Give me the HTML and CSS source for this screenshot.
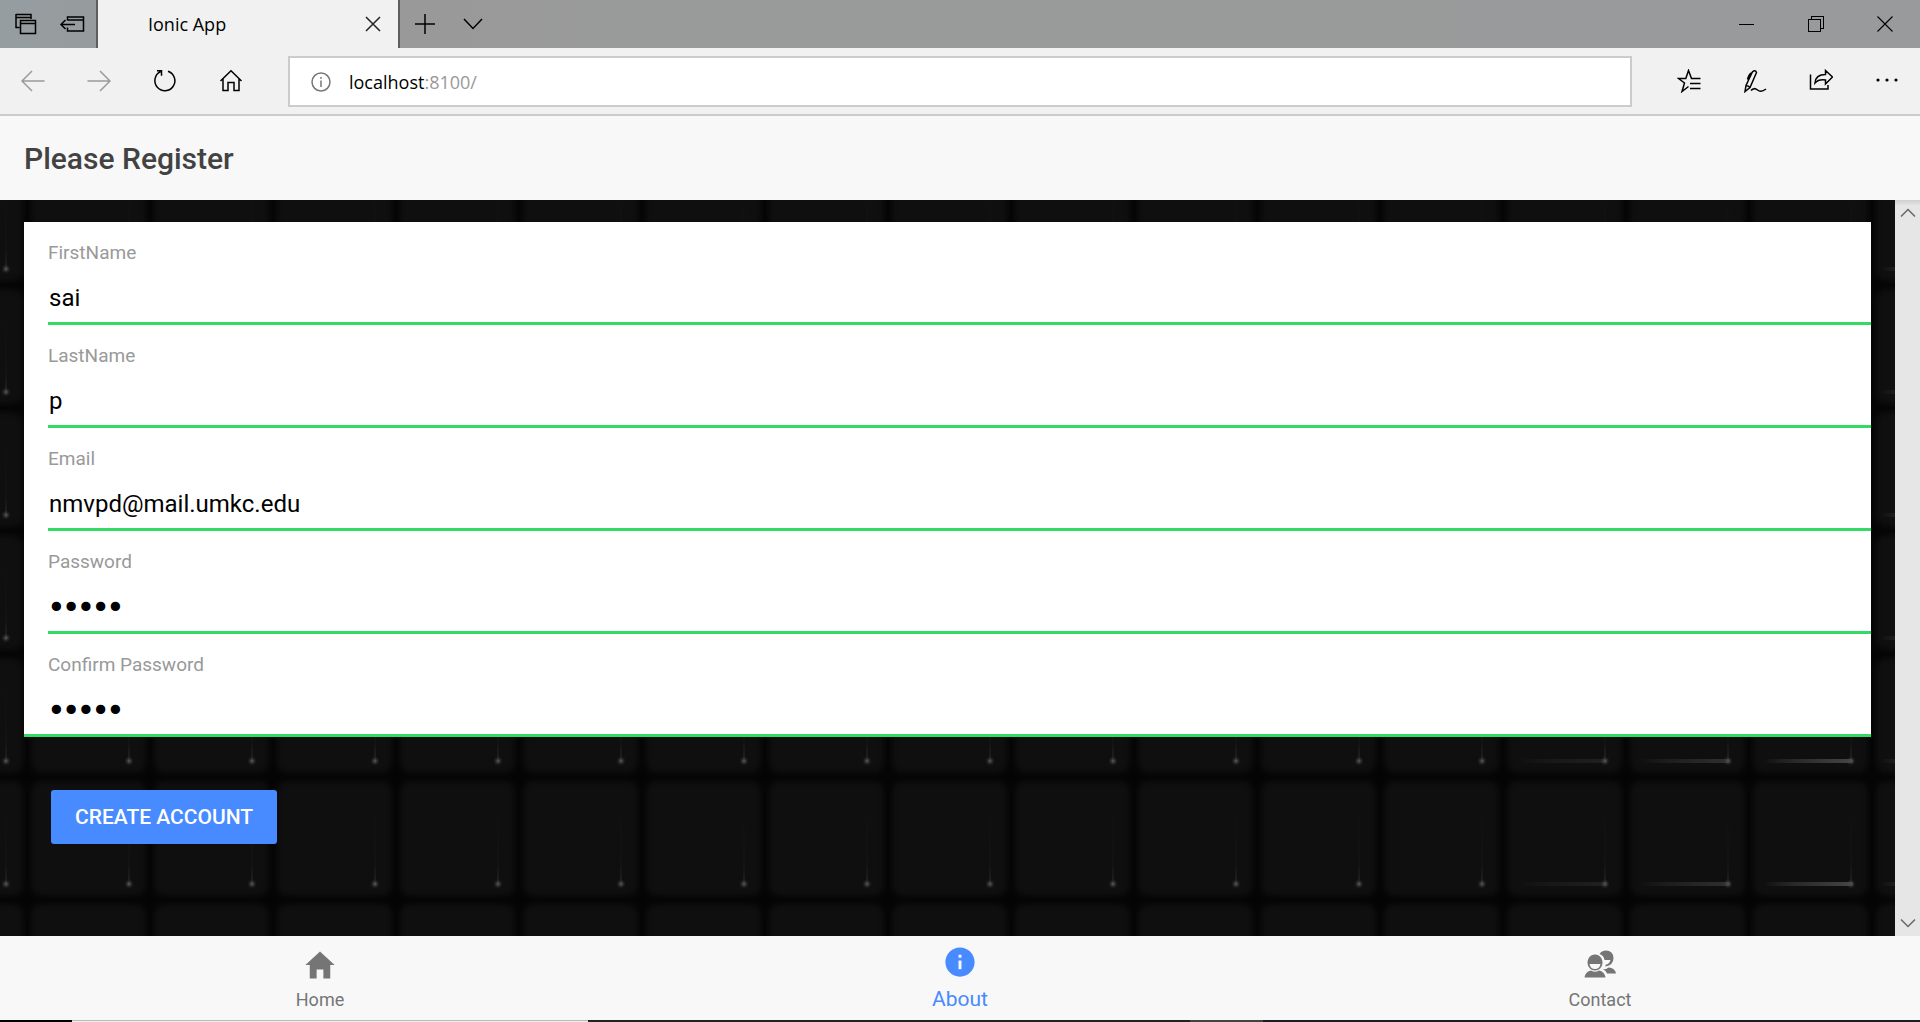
FILE: index.html
```html
<!DOCTYPE html>
<html lang="en">
<head>
<meta charset="utf-8">
<title>Ionic App</title>
<link rel="stylesheet" href="styles.css">
</head>
<body>
<div class="tabstrip">
  <div class="tabstrip-tools">
    <button class="chrome-btn tool" aria-label="Tabs set aside"><svg width="24" height="24" viewBox="0 0 24 24"><path d="M3 2.500h15V7M3 2v13.500h3.500M3 5.500h15M7.500 8.500h15v13h-15zM7.500 11.500h15"/></svg></button>
    <button class="chrome-btn tool" aria-label="Set tabs aside"><svg width="26" height="24" viewBox="0 0 26 24"><path d="M8.500 8.500V5h16v14h-16v-3.500M8.500 8h16M2 12.500h14M6.500 8L2 12.500L6.500 17"/></svg></button>
  </div>
  <div class="tab">
    <span class="tab-name">Ionic App</span>
    <button class="chrome-btn tab-close" aria-label="Close tab"><svg width="16" height="16" viewBox="0 0 16 16"><path d="M1 1l14 14M15 1L1 15"/></svg></button>
  </div>
  <div class="tab-actions">
    <button class="chrome-btn tool" aria-label="New tab"><svg width="20" height="20" viewBox="0 0 20 20"><path d="M10 0v20M0 10h20"/></svg></button>
    <button class="chrome-btn tool" aria-label="Tab previews"><svg width="20" height="12" viewBox="0 0 20 12"><path d="M1 1l9 9.500L19 1"/></svg></button>
  </div>
  <div class="window-actions">
    <button class="chrome-btn win" aria-label="Minimize"><svg class="crisp" width="15" height="15" viewBox="0 0 15 15"><path d="M0 7.500h15"/></svg></button>
    <button class="chrome-btn win" aria-label="Restore"><svg class="crisp" width="16" height="16" viewBox="0 0 16 16"><path d="M.5 3.500h12v12H.5zM3.500 3.500v-3h12v12h-3"/></svg></button>
    <button class="chrome-btn win" aria-label="Close"><svg class="thin" width="16" height="16" viewBox="0 0 16 16"><path d="M.5 .5l15 15M15.500 .5l-15 15"/></svg></button>
  </div>
</div>

<nav class="toolbar" aria-label="Browser">
  <div class="nav-actions">
    <button class="chrome-btn nav dim" aria-label="Back"><svg width="24" height="22" viewBox="0 0 24 22"><path d="M23.500 11H1M11 1L1 11l10 10"/></svg></button>
    <button class="chrome-btn nav dim" aria-label="Forward"><svg width="24" height="22" viewBox="0 0 24 22"><path d="M.5 11H23M13 1l10 10-10 10"/></svg></button>
    <button class="chrome-btn nav" aria-label="Refresh"><svg width="24" height="24" viewBox="0 0 24 24"><path d="M15 2.200a10 10 0 1 1-7.500 .5M4 1.800h4.500v5"/></svg></button>
    <button class="chrome-btn nav" aria-label="Home"><svg width="24" height="24" viewBox="0 0 24 24"><path d="M1.500 12L12 1.800L22.500 12M4 9.800v11.700h5v-8h6v8h5v-11.700"/></svg></button>
  </div>
  <label class="address">
    <svg width="20" height="20" viewBox="0 0 20 20"><circle cx="10" cy="10" r="9"/><path d="M10 8.500v6.500M10 5v1.800"/></svg>
    <span class="url">localhost<span class="url-port">:8100/</span></span>
  </label>
  <div class="page-actions">
    <button class="chrome-btn nav" aria-label="Favorites"><svg width="24" height="24" viewBox="0 0 24 24"><path d="M23.500 9.500H14.500L11.500 1.500L8.800 9.500H1.500L7.500 14L5 22.500L11.500 17.500M13 14.500h10.500M13 19.500h10.500"/></svg></button>
    <button class="chrome-btn nav" aria-label="Add notes"><svg width="24" height="24" viewBox="0 0 24 24"><path d="M2 22.500l1-6L9.500 2.800q3-2.500 4 .7L7 18.500zM3 16.500q2.500 .2 4 2M8.500 4Q6 5 4.500 10.500M8 21.500q3-3.500 6.500-.5t8.500-1"/></svg></button>
    <button class="chrome-btn nav" aria-label="Share"><svg width="24" height="24" viewBox="0 0 24 24"><path d="M1.500 5.500v14.500h17.500v-4M6 14q.5-8.500 10.500-8.500V1.500L23.500 8l-7 7V11Q9.500 10 6 14z"/></svg></button>
    <button class="chrome-btn nav" aria-label="Settings and more"><svg class="solid" width="24" height="24" viewBox="0 0 24 24"><circle cx="3" cy="11" r="1.600"/><circle cx="12" cy="11" r="1.600"/><circle cx="21" cy="11" r="1.600"/></svg></button>
  </div>
</nav>

<header class="app-header"><h1>Please Register</h1></header>

<div class="viewport">
  <main class="content">
    <svg class="backdrop" width="100%" height="100%" aria-hidden="true">
      <defs>
        <filter id="soft" x="-20%" y="-20%" width="140%" height="140%" color-interpolation-filters="sRGB"><feGaussianBlur stdDeviation="3"/></filter>
        <linearGradient id="edge" x1="0" x2="0" y1="0" y2="1"><stop offset="0" stop-color="#121212" stop-opacity="0"/><stop offset=".8" stop-color="#131313"/><stop offset="1" stop-color="#202020"/></linearGradient>
        <linearGradient id="shine" x1="0" x2="1" y1="0" y2="0"><stop offset="0" stop-color="#444" stop-opacity="0"/><stop offset=".5" stop-color="#333"/><stop offset="1" stop-color="#4c4c4c"/></linearGradient>
        <radialGradient id="glint"><stop offset="0" stop-color="#606060"/><stop offset=".4" stop-color="#444" stop-opacity=".6"/><stop offset="1" stop-color="#222" stop-opacity="0"/></radialGradient>
        <pattern id="keys" x="27" y="-38" width="123" height="123" patternUnits="userSpaceOnUse">
          <rect width="123" height="123" fill="#040404"/>
          <rect x="4" y="4" width="115" height="115" rx="10" fill="#0f0f0f" filter="url(#soft)"/>
          <rect x="101" y="20" width="2" height="86" fill="url(#edge)"/>
          <circle cx="102" cy="107" r="5" fill="url(#glint)"/>
        </pattern>
        <pattern id="shines" x="0" y="66" width="123" height="123" patternUnits="userSpaceOnUse">
          <rect y="1" width="90" height="4" rx="2" fill="url(#shine)"/>
        </pattern>
      </defs>
      <rect width="100%" height="100%" fill="url(#keys)"/>
      <svg x="1517" width="90" height="100%" opacity=".3"><rect width="90" height="100%" fill="url(#shines)"/></svg>
      <svg x="1640" width="90" height="100%" opacity=".55"><rect width="90" height="100%" fill="url(#shines)"/></svg>
      <svg x="1763" width="90" height="100%" opacity=".9"><rect width="90" height="100%" fill="url(#shines)"/></svg>
      <svg x="1880" width="90" height="100%" opacity=".9"><rect width="90" height="100%" fill="url(#shines)"/></svg>
    </svg>
    <form class="register">
      <div class="fields">
        <div class="field"><label for="first">FirstName</label><input id="first" type="text" value="sai"></div>
        <div class="field"><label for="last">LastName</label><input id="last" type="text" value="p"></div>
        <div class="field"><label for="email">Email</label><input id="email" type="email" value="nmvpd@mail.umkc.edu"></div>
        <div class="field"><label for="pass">Password</label><input id="pass" type="password" value="12345"></div>
        <div class="field"><label for="confirm">Confirm Password</label><input id="confirm" type="password" value="12345"></div>
      </div>
      <button class="submit" type="button">CREATE ACCOUNT</button>
    </form>
  </main>
  <div class="scrollbar">
    <button class="chrome-btn scroll-btn" aria-label="Scroll up"><svg width="16" height="10" viewBox="0 0 16 10"><path d="M1 8.500l7-7 7 7"/></svg></button>
    <button class="chrome-btn scroll-btn" aria-label="Scroll down"><svg width="16" height="10" viewBox="0 0 16 10"><path d="M1 1.500l7 7 7-7"/></svg></button>
  </div>
</div>

<nav class="app-tabs" aria-label="App">
  <a href="#home"><svg width="36" height="36" viewBox="0 0 512 512"><path d="M208 448V320h96v128h97.600V256H464L256 64 48 256h62.400v192z"/></svg><span>Home</span></a>
  <a href="#about" class="active"><svg width="36" height="36" viewBox="0 0 512 512"><path d="M256 48C141.200 48 48 141.200 48 256s93.200 208 208 208 208-93.200 208-208S370.800 48 256 48zm21 312h-42V235h42v125zm0-166h-42v-42h42v42z"/></svg><span>About</span></a>
  <a href="#contact"><svg width="36" height="36" viewBox="1 1 36 36"><path fill-rule="evenodd" d="M14 8.500a7.500 8 0 1 0 .01 0zM8.500 18h11q-.8 5-5.500 5t-5.500-5z"/><path d="M3.500 31.500q1-6 6.500-7q4 2.500 8 0q5.500 1 6.500 7z"/><path d="M18.500 8Q20.500 4.500 25 4.500q7 0 7.500 7.500q0 7-8 8.500v-1.800q4-.7 5-4.700h-6q-.5-4.500-5-6z"/><path d="M22 23.500q3.500-.2 5.500-2Q34 22 35 27.500h-9q-1-3-4-4z"/></svg><span>Contact</span></a>
</nav>
<div class="taskbar-edge"><i></i><i></i><i></i><i></i><i></i></div>
</body>
</html>
```
FILE: styles.css
```css
* { box-sizing: border-box; }

body {
  margin: 0;
  height: 100vh;
  display: flex;
  flex-direction: column;
  overflow: hidden;
  background: #f8f8f8;
  font-family: Roboto, "Liberation Sans", sans-serif;
}

/* Browser window */
.chrome-btn {
  display: flex;
  align-items: center;
  justify-content: center;
  padding: 0;
  border: 0;
  background: none;
  color: #000;
}
.chrome-btn svg, .address svg {
  fill: none;
  stroke: currentColor;
  stroke-width: 1.5;
}
.chrome-btn .thin { stroke-width: 1.1; }
.chrome-btn .crisp { stroke-width: 1; shape-rendering: crispEdges; }
.chrome-btn .solid { fill: currentColor; stroke: none; }

.tabstrip {
  display: flex;
  height: 48px;
  flex: none;
  background: linear-gradient(90deg, #969da0, #989998 20%, #999b9b 60%, #989a9b);
  font: 18px "Open Sans", "Noto Sans", sans-serif;
}
.tabstrip-tools, .tab-actions, .window-actions { display: flex; }
.tabstrip-tools { width: 96px; padding-left: 1px; }
.tab-actions { padding-left: 1px; }
.tool { width: 48px; }
.tab {
  display: flex;
  align-items: center;
  justify-content: space-between;
  width: 304px;
  padding: 0 17px 0 50px;
  border: solid #5c5e5f;
  border-width: 0 2px;
  background: #f1f1f1;
}
.tab-close { width: 16px; height: 48px; color: #222; }
.window-actions { margin-left: auto; padding-right: 1px; }
.win { width: 69px; }

.toolbar {
  display: flex;
  align-items: center;
  flex: none;
  height: 68px;
  border-bottom: 2px solid #ccc;
  background: #f1f1f1;
}
.nav-actions, .page-actions { display: flex; }
.nav-actions { width: 288px; }
.nav { width: 66px; height: 66px; }
.dim { color: #999; }
.address {
  display: flex;
  align-items: center;
  gap: 18px;
  flex: 1;
  height: 51px;
  padding: 2px 21px 0;
  border: 2px solid #ccc;
  background: #fff;
  color: #777;
  font: 18px "Open Sans", "Noto Sans", sans-serif;
}
.url { color: #000; }
.url-port { color: #999; }
.page-actions { width: 288px; padding-left: 24px; }

/* App */
.app-header {
  flex: none;
  display: flex;
  align-items: center;
  height: 84px;
  padding: 0 24px;
  background: #f8f8f8;
}
.app-header h1 {
  margin: 0;
  color: #424242;
  font-size: 30px;
  font-weight: 500;
}

.viewport { display: flex; flex: 1; min-height: 0; }
.content {
  position: relative;
  flex: 1;
  overflow: hidden;
  background: #0e0e0e;
}
.backdrop { position: absolute; inset: 0; }
.register { position: relative; padding: 22px 24px; }
.fields {
  padding-left: 24px;
  border-bottom: 3px solid #32db64;
  background: #fff;
}
.field {
  display: flex;
  flex-direction: column;
  padding: 19px 0 5px;
  border-bottom: 3px solid #32db64;
}
.field:last-child { border-bottom: 0; }
.field label {
  color: #999;
  font-size: 19px;
  line-height: 24px;
}
.field input {
  height: 38px;
  margin-top: 14px;
  padding: 0 1px;
  border: 0;
  outline: 0;
  background: none;
  color: #000;
  font: 24px Roboto, sans-serif;
}
.field input[type="password"] {
  font: 25px "DejaVu Sans", sans-serif;
  -webkit-text-stroke: 2px #000;
}
.submit {
  height: 54px;
  margin: 53px 27px;
  padding: 0 24px;
  border: 0;
  border-radius: 3px;
  background: #488aff;
  color: #fff;
  font: 500 21px Roboto, sans-serif;
}

.scrollbar {
  display: flex;
  flex-direction: column;
  justify-content: space-between;
  width: 25px;
  background: linear-gradient(#cfcfcf, #e6e6e6 6px);
}
.scroll-btn { height: 26px; color: #666; }

.app-tabs {
  flex: none;
  display: grid;
  grid-template-columns: repeat(3, 1fr);
  height: 84px;
  background: #f8f8f8;
}
.app-tabs a {
  display: flex;
  flex-direction: column;
  align-items: center;
  gap: 5px;
  padding-top: 11px;
  color: #757575;
  font-size: 18px;
  line-height: 24px;
  text-decoration: none;
}
.app-tabs .active { padding-top: 8px; color: #488aff; font-size: 21px; gap: 7px; }
.app-tabs svg { fill: currentColor; }

.taskbar-edge {
  flex: none;
  display: grid;
  grid-template-columns: 72fr 516fr 602fr 73fr 657fr;
  height: 2px;
  background: #1c1c22;
}
.taskbar-edge :nth-child(1) { background: #000; }
.taskbar-edge :nth-child(2) { border-top: 1px solid #bbb; background: #eee; }
.taskbar-edge :nth-child(3) { background: #222; }
.taskbar-edge :nth-child(4) { background: #444; }
```
